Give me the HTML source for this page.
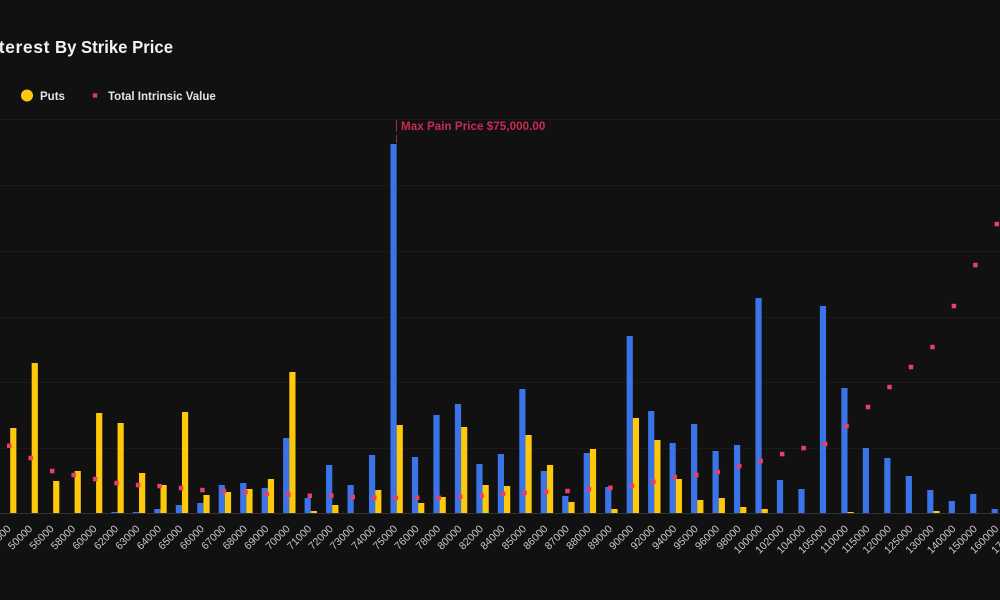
<!DOCTYPE html>
<html><head><meta charset="utf-8"><style>
html,body{margin:0;padding:0;background:#111;width:1000px;height:600px;overflow:hidden}
svg{display:block;font-family:"Liberation Sans",sans-serif}
.b{fill:#3b74e8}.y{fill:#fdc90a}.d{fill:#e83f68}
.l text{font-size:10.6px;fill:#c8c8c8;text-anchor:end}
</style></head><body>
<svg width="1000" height="600" viewBox="0 0 1000 600">
<rect width="1000" height="600" fill="#111"/>
<g stroke="#1a1a1a" stroke-width="1"><path d="M0 119.5H1000M0 185.5H1000M0 251.5H1000M0 317.5H1000M0 382.5H1000M0 448.5H1000"/></g>
<path d="M0 513.5H1000" stroke="#333"/>
<text x="50" y="53" text-anchor="end" font-size="17.5" font-weight="700" letter-spacing=".6" fill="#f2f2f2">Open Interest</text>
<text x="55" y="53" font-size="17.5" font-weight="700" fill="#f2f2f2" textLength="118" lengthAdjust="spacingAndGlyphs">By Strike Price</text>
<circle cx="27" cy="95.5" r="6" fill="#fdc90a"/>
<text x="40" y="100" font-size="11.5" font-weight="700" fill="#e4e4e4">Puts</text>
<rect x="92.8" y="93.3" width="4.4" height="4.4" fill="#d8386a"/>
<text x="108" y="100" font-size="11.5" font-weight="700" fill="#e4e4e4">Total Intrinsic Value</text>
<g class="l">
<g transform="translate(10.2)"><path class="y" d="M0 513V428h6.2V513z"/><rect class="d" x="-3.2" y="443.5" width="4.5" height="4.5"/><text transform="translate(1.4,529.4) rotate(-45)">48000</text></g>
<g transform="translate(31.67)"><path class="y" d="M0 513V363h6.2V513z"/><rect class="d" x="-3.2" y="455.8" width="4.5" height="4.5"/><text transform="translate(1.4,529.4) rotate(-45)">50000</text></g>
<g transform="translate(53.14)"><path class="y" d="M0 513V481h6.2V513z"/><rect class="d" x="-3.2" y="468.8" width="4.5" height="4.5"/><text transform="translate(1.4,529.4) rotate(-45)">56000</text></g>
<g transform="translate(74.61)"><path class="y" d="M0 513V471h6.2V513z"/><rect class="d" x="-3.2" y="472.8" width="4.5" height="4.5"/><text transform="translate(1.4,529.4) rotate(-45)">58000</text></g>
<g transform="translate(96.08)"><path class="y" d="M0 513V413h6.2V513z"/><rect class="d" x="-3.2" y="476.8" width="4.5" height="4.5"/><text transform="translate(1.4,529.4) rotate(-45)">60000</text></g>
<g transform="translate(117.55)"><path class="b" d="M-6.2 513V512h6.2V513z"/><path class="y" d="M0 513V423h6.2V513z"/><rect class="d" x="-3.2" y="480.8" width="4.5" height="4.5"/><text transform="translate(1.4,529.4) rotate(-45)">62000</text></g>
<g transform="translate(139.02)"><path class="b" d="M-6.2 513V512h6.2V513z"/><path class="y" d="M0 513V473h6.2V513z"/><rect class="d" x="-3.2" y="482.8" width="4.5" height="4.5"/><text transform="translate(1.4,529.4) rotate(-45)">63000</text></g>
<g transform="translate(160.49)"><path class="b" d="M-6.2 513V509h6.2V513z"/><path class="y" d="M0 513V485h6.2V513z"/><rect class="d" x="-3.2" y="483.8" width="4.5" height="4.5"/><text transform="translate(1.4,529.4) rotate(-45)">64000</text></g>
<g transform="translate(181.96)"><path class="b" d="M-6.2 513V505h6.2V513z"/><path class="y" d="M0 513V412h6.2V513z"/><rect class="d" x="-3.2" y="485.8" width="4.5" height="4.5"/><text transform="translate(1.4,529.4) rotate(-45)">65000</text></g>
<g transform="translate(203.43)"><path class="b" d="M-6.2 513V503h6.2V513z"/><path class="y" d="M0 513V495h6.2V513z"/><rect class="d" x="-3.2" y="487.8" width="4.5" height="4.5"/><text transform="translate(1.4,529.4) rotate(-45)">66000</text></g>
<g transform="translate(224.9)"><path class="b" d="M-6.2 513V485h6.2V513z"/><path class="y" d="M0 513V492h6.2V513z"/><rect class="d" x="-3.2" y="488.8" width="4.5" height="4.5"/><text transform="translate(1.4,529.4) rotate(-45)">67000</text></g>
<g transform="translate(246.37)"><path class="b" d="M-6.2 513V483h6.2V513z"/><path class="y" d="M0 513V489h6.2V513z"/><rect class="d" x="-3.2" y="489.8" width="4.5" height="4.5"/><text transform="translate(1.4,529.4) rotate(-45)">68000</text></g>
<g transform="translate(267.84)"><path class="b" d="M-6.2 513V488h6.2V513z"/><path class="y" d="M0 513V479h6.2V513z"/><rect class="d" x="-3.2" y="491.8" width="4.5" height="4.5"/><text transform="translate(1.4,529.4) rotate(-45)">69000</text></g>
<g transform="translate(289.31)"><path class="b" d="M-6.2 513V438h6.2V513z"/><path class="y" d="M0 513V372h6.2V513z"/><rect class="d" x="-3.2" y="492.5" width="4.5" height="4.5"/><text transform="translate(1.4,529.4) rotate(-45)">70000</text></g>
<g transform="translate(310.78)"><path class="b" d="M-6.2 513V498h6.2V513z"/><path class="y" d="M0 513V511h6.2V513z"/><rect class="d" x="-3.2" y="493.5" width="4.5" height="4.5"/><text transform="translate(1.4,529.4) rotate(-45)">71000</text></g>
<g transform="translate(332.25)"><path class="b" d="M-6.2 513V465h6.2V513z"/><path class="y" d="M0 513V505h6.2V513z"/><rect class="d" x="-3.2" y="493.5" width="4.5" height="4.5"/><text transform="translate(1.4,529.4) rotate(-45)">72000</text></g>
<g transform="translate(353.72)"><path class="b" d="M-6.2 513V485h6.2V513z"/><rect class="d" x="-3.2" y="494.8" width="4.5" height="4.5"/><text transform="translate(1.4,529.4) rotate(-45)">73000</text></g>
<g transform="translate(375.19)"><path class="b" d="M-6.2 513V455h6.2V513z"/><path class="y" d="M0 513V490h6.2V513z"/><rect class="d" x="-3.2" y="495.5" width="4.5" height="4.5"/><text transform="translate(1.4,529.4) rotate(-45)">74000</text></g>
<g transform="translate(396.66)"><path class="b" d="M-6.2 513V144h6.2V513z"/><path class="y" d="M0 513V425h6.2V513z"/><rect class="d" x="-3.2" y="495.5" width="4.5" height="4.5"/><text transform="translate(1.4,529.4) rotate(-45)">75000</text></g>
<g transform="translate(418.13)"><path class="b" d="M-6.2 513V457h6.2V513z"/><path class="y" d="M0 513V503h6.2V513z"/><rect class="d" x="-3.2" y="495.5" width="4.5" height="4.5"/><text transform="translate(1.4,529.4) rotate(-45)">76000</text></g>
<g transform="translate(439.6)"><path class="b" d="M-6.2 513V415h6.2V513z"/><path class="y" d="M0 513V497h6.2V513z"/><rect class="d" x="-3.2" y="495.5" width="4.5" height="4.5"/><text transform="translate(1.4,529.4) rotate(-45)">78000</text></g>
<g transform="translate(461.07)"><path class="b" d="M-6.2 513V404h6.2V513z"/><path class="y" d="M0 513V427h6.2V513z"/><rect class="d" x="-3.2" y="494.5" width="4.5" height="4.5"/><text transform="translate(1.4,529.4) rotate(-45)">80000</text></g>
<g transform="translate(482.54)"><path class="b" d="M-6.2 513V464h6.2V513z"/><path class="y" d="M0 513V485h6.2V513z"/><rect class="d" x="-3.2" y="493.5" width="4.5" height="4.5"/><text transform="translate(1.4,529.4) rotate(-45)">82000</text></g>
<g transform="translate(504.01)"><path class="b" d="M-6.2 513V454h6.2V513z"/><path class="y" d="M0 513V486h6.2V513z"/><rect class="d" x="-3.2" y="491.5" width="4.5" height="4.5"/><text transform="translate(1.4,529.4) rotate(-45)">84000</text></g>
<g transform="translate(525.48)"><path class="b" d="M-6.2 513V389h6.2V513z"/><path class="y" d="M0 513V435h6.2V513z"/><rect class="d" x="-3.2" y="490.5" width="4.5" height="4.5"/><text transform="translate(1.4,529.4) rotate(-45)">85000</text></g>
<g transform="translate(546.95)"><path class="b" d="M-6.2 513V471h6.2V513z"/><path class="y" d="M0 513V465h6.2V513z"/><rect class="d" x="-3.2" y="489.5" width="4.5" height="4.5"/><text transform="translate(1.4,529.4) rotate(-45)">86000</text></g>
<g transform="translate(568.42)"><path class="b" d="M-6.2 513V496h6.2V513z"/><path class="y" d="M0 513V502h6.2V513z"/><rect class="d" x="-3.2" y="488.8" width="4.5" height="4.5"/><text transform="translate(1.4,529.4) rotate(-45)">87000</text></g>
<g transform="translate(589.89)"><path class="b" d="M-6.2 513V453h6.2V513z"/><path class="y" d="M0 513V449h6.2V513z"/><rect class="d" x="-3.2" y="486.8" width="4.5" height="4.5"/><text transform="translate(1.4,529.4) rotate(-45)">88000</text></g>
<g transform="translate(611.36)"><path class="b" d="M-6.2 513V487h6.2V513z"/><path class="y" d="M0 513V509h6.2V513z"/><rect class="d" x="-3.2" y="485.5" width="4.5" height="4.5"/><text transform="translate(1.4,529.4) rotate(-45)">89000</text></g>
<g transform="translate(632.83)"><path class="b" d="M-6.2 513V336h6.2V513z"/><path class="y" d="M0 513V418h6.2V513z"/><rect class="d" x="-3.2" y="483.5" width="4.5" height="4.5"/><text transform="translate(1.4,529.4) rotate(-45)">90000</text></g>
<g transform="translate(654.3)"><path class="b" d="M-6.2 513V411h6.2V513z"/><path class="y" d="M0 513V440h6.2V513z"/><rect class="d" x="-3.2" y="479.5" width="4.5" height="4.5"/><text transform="translate(1.4,529.4) rotate(-45)">92000</text></g>
<g transform="translate(675.77)"><path class="b" d="M-6.2 513V443h6.2V513z"/><path class="y" d="M0 513V479h6.2V513z"/><rect class="d" x="-3.2" y="474.8" width="4.5" height="4.5"/><text transform="translate(1.4,529.4) rotate(-45)">94000</text></g>
<g transform="translate(697.24)"><path class="b" d="M-6.2 513V424h6.2V513z"/><path class="y" d="M0 513V500h6.2V513z"/><rect class="d" x="-3.2" y="472.8" width="4.5" height="4.5"/><text transform="translate(1.4,529.4) rotate(-45)">95000</text></g>
<g transform="translate(718.71)"><path class="b" d="M-6.2 513V451h6.2V513z"/><path class="y" d="M0 513V498h6.2V513z"/><rect class="d" x="-3.2" y="469.8" width="4.5" height="4.5"/><text transform="translate(1.4,529.4) rotate(-45)">96000</text></g>
<g transform="translate(740.18)"><path class="b" d="M-6.2 513V445h6.2V513z"/><path class="y" d="M0 513V507h6.2V513z"/><rect class="d" x="-3.2" y="463.8" width="4.5" height="4.5"/><text transform="translate(1.4,529.4) rotate(-45)">98000</text></g>
<g transform="translate(761.65)"><path class="b" d="M-6.2 513V298h6.2V513z"/><path class="y" d="M0 513V509h6.2V513z"/><rect class="d" x="-3.2" y="458.8" width="4.5" height="4.5"/><text transform="translate(1.4,529.4) rotate(-45)">100000</text></g>
<g transform="translate(783.12)"><path class="b" d="M-6.2 513V480h6.2V513z"/><rect class="d" x="-3.2" y="451.8" width="4.5" height="4.5"/><text transform="translate(1.4,529.4) rotate(-45)">102000</text></g>
<g transform="translate(804.59)"><path class="b" d="M-6.2 513V489h6.2V513z"/><rect class="d" x="-3.2" y="445.8" width="4.5" height="4.5"/><text transform="translate(1.4,529.4) rotate(-45)">104000</text></g>
<g transform="translate(826.06)"><path class="b" d="M-6.2 513V306h6.2V513z"/><rect class="d" x="-3.2" y="441.8" width="4.5" height="4.5"/><text transform="translate(1.4,529.4) rotate(-45)">105000</text></g>
<g transform="translate(847.53)"><path class="b" d="M-6.2 513V388h6.2V513z"/><path class="y" d="M0 513V512h6.2V513z"/><rect class="d" x="-3.2" y="423.8" width="4.5" height="4.5"/><text transform="translate(1.4,529.4) rotate(-45)">110000</text></g>
<g transform="translate(869)"><path class="b" d="M-6.2 513V448h6.2V513z"/><rect class="d" x="-3.2" y="404.8" width="4.5" height="4.5"/><text transform="translate(1.4,529.4) rotate(-45)">115000</text></g>
<g transform="translate(890.47)"><path class="b" d="M-6.2 513V458h6.2V513z"/><rect class="d" x="-3.2" y="384.8" width="4.5" height="4.5"/><text transform="translate(1.4,529.4) rotate(-45)">120000</text></g>
<g transform="translate(911.94)"><path class="b" d="M-6.2 513V476h6.2V513z"/><rect class="d" x="-3.2" y="364.8" width="4.5" height="4.5"/><text transform="translate(1.4,529.4) rotate(-45)">125000</text></g>
<g transform="translate(933.41)"><path class="b" d="M-6.2 513V490h6.2V513z"/><path class="y" d="M0 513V511h6.2V513z"/><rect class="d" x="-3.2" y="344.8" width="4.5" height="4.5"/><text transform="translate(1.4,529.4) rotate(-45)">130000</text></g>
<g transform="translate(954.88)"><path class="b" d="M-6.2 513V501h6.2V513z"/><rect class="d" x="-3.2" y="303.8" width="4.5" height="4.5"/><text transform="translate(1.4,529.4) rotate(-45)">140000</text></g>
<g transform="translate(976.35)"><path class="b" d="M-6.2 513V494h6.2V513z"/><rect class="d" x="-3.2" y="262.8" width="4.5" height="4.5"/><text transform="translate(1.4,529.4) rotate(-45)">150000</text></g>
<g transform="translate(997.82)"><path class="b" d="M-6.2 513V509h6.2V513z"/><rect class="d" x="-3.2" y="221.8" width="4.5" height="4.5"/><text transform="translate(1.4,529.4) rotate(-45)">160000</text></g>
<g transform="translate(1019.29)"><text transform="translate(1.4,529.4) rotate(-45)">170000</text></g>
</g>
<path d="M396.5 120V131.5M396.5 135V143" stroke="#a8274a" stroke-width="1"/>
<text x="401" y="130" font-size="11.6" font-weight="700" letter-spacing=".05" fill="#cc2a55">Max Pain Price $75,000.00</text>
</svg>
</body></html>
